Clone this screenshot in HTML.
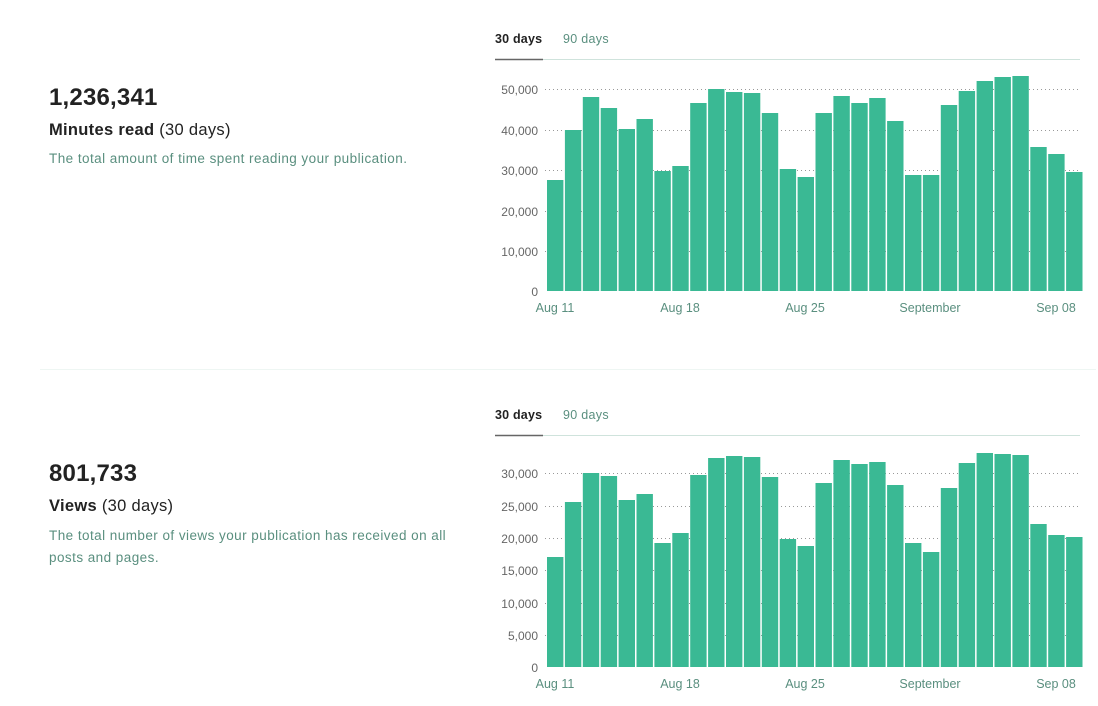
<!DOCTYPE html>
<html><head><meta charset="utf-8"><style>
body{margin:0;width:1098px;height:706px;background:#fff;font-family:"Liberation Sans",sans-serif;position:relative;overflow:hidden}
.t{position:absolute;left:49px}
.num{font-size:24px;font-weight:bold;color:#222;letter-spacing:0.2px}
.ttl{font-size:16.5px;color:#222;letter-spacing:0.3px}
.ttl b{font-weight:bold}
.desc{font-size:13.5px;color:#5a8f7f;line-height:22px;width:400px;letter-spacing:0.45px}
svg{position:absolute;left:0;top:0}
</style></head><body>
<div class="t num" style="top:84px">1,236,341</div>
<div class="t ttl" style="top:121px"><b>Minutes read</b> (30 days)</div>
<div class="t desc" style="top:148px">The total amount of time spent reading your publication.</div>
<div class="t num" style="top:460px">801,733</div>
<div class="t ttl" style="top:497px"><b>Views</b> (30 days)</div>
<div class="t desc" style="top:525px">The total number of views your publication has received on all posts and pages.</div>
<svg width="1098" height="706" font-family="Liberation Sans, sans-serif">
<line x1="40" y1="369.5" x2="1096" y2="369.5" stroke="#eef6f3"/>
<g>
<text x="495" y="43" font-size="12.5" font-weight="bold" fill="#222" letter-spacing="0.2">30 days</text>
<text x="563" y="43" font-size="12.5" fill="#5a8f7f" letter-spacing="0.3">90 days</text>
<line x1="495" y1="59.5" x2="1080" y2="59.5" stroke="#cfe3dc"/>
<line x1="495" y1="59.5" x2="543" y2="59.5" stroke="#666" stroke-width="1.5"/>
<text x="495" y="419" font-size="12.5" font-weight="bold" fill="#222" letter-spacing="0.2">30 days</text>
<text x="563" y="419" font-size="12.5" fill="#5a8f7f" letter-spacing="0.3">90 days</text>
<line x1="495" y1="435.5" x2="1080" y2="435.5" stroke="#cfe3dc"/>
<line x1="495" y1="435.5" x2="543" y2="435.5" stroke="#666" stroke-width="1.5"/>
</g>
<g stroke="#999" stroke-dasharray="1,3">
<line x1="545" y1="89.5" x2="1080" y2="89.5"/><line x1="545" y1="130.5" x2="1080" y2="130.5"/><line x1="545" y1="170.5" x2="1080" y2="170.5"/><line x1="545" y1="211.5" x2="1080" y2="211.5"/><line x1="545" y1="251.5" x2="1080" y2="251.5"/>
<line x1="545" y1="473.5" x2="1080" y2="473.5"/><line x1="545" y1="506.5" x2="1080" y2="506.5"/><line x1="545" y1="538.5" x2="1080" y2="538.5"/><line x1="545" y1="570.5" x2="1080" y2="570.5"/><line x1="545" y1="603.5" x2="1080" y2="603.5"/><line x1="545" y1="635.5" x2="1080" y2="635.5"/>
</g>
<g font-size="12" fill="#666" text-anchor="end">
<text x="538" y="94">50,000</text><text x="538" y="135">40,000</text><text x="538" y="175">30,000</text><text x="538" y="216">20,000</text><text x="538" y="256">10,000</text><text x="538" y="296">0</text>
<text x="538" y="478">30,000</text><text x="538" y="511">25,000</text><text x="538" y="543">20,000</text><text x="538" y="575">15,000</text><text x="538" y="608">10,000</text><text x="538" y="640">5,000</text><text x="538" y="672">0</text>
</g>
<g font-size="12.5" fill="#5a8f7f" text-anchor="middle">
<text x="555" y="312">Aug 11</text><text x="680" y="312">Aug 18</text><text x="805" y="312">Aug 25</text><text x="930" y="312">September</text><text x="1056" y="312">Sep 08</text>
<text x="555" y="688">Aug 11</text><text x="680" y="688">Aug 18</text><text x="805" y="688">Aug 25</text><text x="930" y="688">September</text><text x="1056" y="688">Sep 08</text>
</g>
<g fill="#3ab994">
<rect x="547" y="180" width="16.4" height="111"/><rect x="564.9" y="130" width="16.4" height="161"/><rect x="582.8" y="97" width="16.4" height="194"/><rect x="600.7" y="108" width="16.4" height="183"/><rect x="618.6" y="129" width="16.4" height="162"/><rect x="636.5" y="119" width="16.4" height="172"/><rect x="654.4" y="171" width="16.4" height="120"/><rect x="672.3" y="166" width="16.4" height="125"/><rect x="690.2" y="103" width="16.4" height="188"/><rect x="708.1" y="89" width="16.4" height="202"/><rect x="726" y="92" width="16.4" height="199"/><rect x="743.9" y="93" width="16.4" height="198"/><rect x="761.8" y="113" width="16.4" height="178"/><rect x="779.7" y="169" width="16.4" height="122"/><rect x="797.6" y="177" width="16.4" height="114"/><rect x="815.5" y="113" width="16.4" height="178"/><rect x="833.4" y="96" width="16.4" height="195"/><rect x="851.3" y="103" width="16.4" height="188"/><rect x="869.2" y="98" width="16.4" height="193"/><rect x="887.1" y="121" width="16.4" height="170"/><rect x="905" y="175" width="16.4" height="116"/><rect x="922.9" y="175" width="16.4" height="116"/><rect x="940.8" y="105" width="16.4" height="186"/><rect x="958.7" y="91" width="16.4" height="200"/><rect x="976.6" y="81" width="16.4" height="210"/><rect x="994.5" y="77" width="16.4" height="214"/><rect x="1012.4" y="76" width="16.4" height="215"/><rect x="1030.3" y="147" width="16.4" height="144"/><rect x="1048.2" y="154" width="16.4" height="137"/><rect x="1066.1" y="172" width="16.4" height="119"/>
<rect x="547" y="557" width="16.4" height="110"/><rect x="564.9" y="502" width="16.4" height="165"/><rect x="582.8" y="473" width="16.4" height="194"/><rect x="600.7" y="476" width="16.4" height="191"/><rect x="618.6" y="500" width="16.4" height="167"/><rect x="636.5" y="494" width="16.4" height="173"/><rect x="654.4" y="543" width="16.4" height="124"/><rect x="672.3" y="533" width="16.4" height="134"/><rect x="690.2" y="475" width="16.4" height="192"/><rect x="708.1" y="458" width="16.4" height="209"/><rect x="726" y="456" width="16.4" height="211"/><rect x="743.9" y="457" width="16.4" height="210"/><rect x="761.8" y="477" width="16.4" height="190"/><rect x="779.7" y="539" width="16.4" height="128"/><rect x="797.6" y="546" width="16.4" height="121"/><rect x="815.5" y="483" width="16.4" height="184"/><rect x="833.4" y="460" width="16.4" height="207"/><rect x="851.3" y="464" width="16.4" height="203"/><rect x="869.2" y="462" width="16.4" height="205"/><rect x="887.1" y="485" width="16.4" height="182"/><rect x="905" y="543" width="16.4" height="124"/><rect x="922.9" y="552" width="16.4" height="115"/><rect x="940.8" y="488" width="16.4" height="179"/><rect x="958.7" y="463" width="16.4" height="204"/><rect x="976.6" y="453" width="16.4" height="214"/><rect x="994.5" y="454" width="16.4" height="213"/><rect x="1012.4" y="455" width="16.4" height="212"/><rect x="1030.3" y="524" width="16.4" height="143"/><rect x="1048.2" y="535" width="16.4" height="132"/><rect x="1066.1" y="537" width="16.4" height="130"/>
</g>
</svg>
</body></html>
